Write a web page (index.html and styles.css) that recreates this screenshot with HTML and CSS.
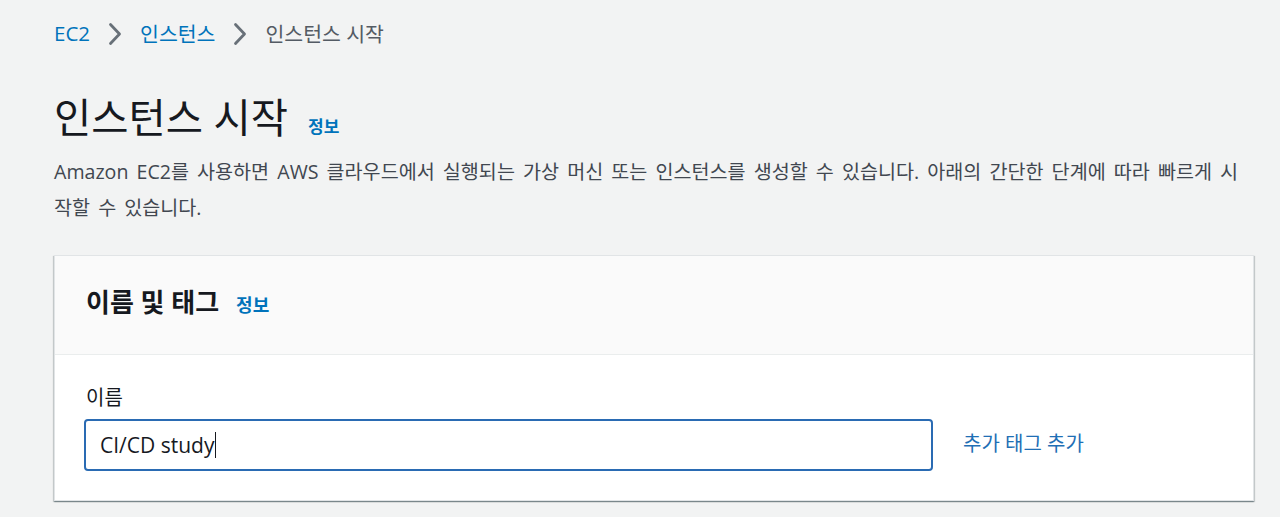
FILE: index.html
```html
<!DOCTYPE html>
<html lang="ko">
<head>
<meta charset="utf-8">
<link rel="stylesheet" href="styles.css">
</head>
<body>
<div class="page">
  <nav class="crumbs">
    <a class="crumb-link">EC2</a>
    <svg class="chev" viewBox="0 0 14 24" width="14" height="24"><path d="M2.5 2.5 L11.5 12 L2.5 21.5" fill="none" stroke="#687078" stroke-width="2.8" stroke-linecap="round" stroke-linejoin="round"/></svg>
    <a class="crumb-link">인스턴스</a>
    <svg class="chev" viewBox="0 0 14 24" width="14" height="24"><path d="M2.5 2.5 L11.5 12 L2.5 21.5" fill="none" stroke="#687078" stroke-width="2.8" stroke-linecap="round" stroke-linejoin="round"/></svg>
    <span class="crumb-current">인스턴스 시작</span>
  </nav>
  <header class="title-row">
    <h1 class="title">인스턴스 시작</h1>
    <a class="info">정보</a>
  </header>
  <p class="desc">Amazon EC2를 사용하면 AWS 클라우드에서 실행되는 가상 머신 또는 인스턴스를 생성할 수 있습니다. 아래의 간단한 단계에 따라 빠르게 시작할 수 있습니다.</p>
  <section class="card">
    <div class="card-head">
      <h2 class="card-title">이름 및 태그</h2>
      <a class="info info-card">정보</a>
    </div>
    <div class="card-body">
      <label class="label">이름</label>
      <div class="field-row">
        <div class="input"><span class="input-text">CI/CD study</span><span class="caret"></span></div>
        <a class="add-tag">추가 태그 추가</a>
      </div>
    </div>
  </section>
</div>
</body>
</html>
```
FILE: styles.css
```css
* { box-sizing: border-box; }
html, body { margin: 0; padding: 0; }
body {
  background: #f2f3f3;
  font-family: "Open Sans", "Noto Sans CJK KR", sans-serif;
  color: #16191f;
  height: 517px;
  overflow: hidden;
}
.page { padding: 0 26px 0 54px; }
.crumbs {
  display: flex;
  align-items: center;
  height: 34px;
  margin-top: 16px;
  font-size: 20.5px;
}
.crumb-link { color: #0073bb; }
.crumb-current { color: #545b64; }
.chev { margin: 1px 18px 0 18px; }
.title-row {
  display: flex;
  align-items: baseline;
  margin-top: 43px;
}
.title {
  margin: 0;
  font-size: 40.5px;
  font-weight: 400;
  line-height: 50px;
}
.info {
  color: #0073bb;
  font-size: 17px;
  font-weight: 700;
  margin-left: 20px;
}
.desc {
  margin: 11px 0 0 0;
  font-size: 19.6px;
  line-height: 36px;
  color: #414750;
  max-width: 1192px;
  word-spacing: 3px;
  word-break: break-all;
}
.card {
  margin-top: 29px;
  background: #fff;
  border: 1px solid #e1e4e6;
  box-shadow: 0 1px 1px 0 rgba(0,28,36,0.3), 1px 1px 1px 0 rgba(0,28,36,0.15), -1px 1px 1px 0 rgba(0,28,36,0.15);
}
.card-head {
  display: flex;
  align-items: baseline;
  background: #fafafa;
  border-bottom: 1px solid #eaeded;
  height: 99px;
  padding: 27px 31px 0 31px;
}
.card-title {
  margin: 0;
  font-size: 26px;
  font-weight: 700;
  line-height: 38px;
}
.info-card { margin-left: 17px; font-size: 18px; }
.card-body { padding: 29px 31px 29px 29px; }
.label {
  display: block;
  font-size: 20px;
  line-height: 28px;
  color: #16191f;
  padding-left: 2px;
}
.field-row {
  display: flex;
  align-items: center;
  margin-top: 7px;
}
.input {
  display: flex;
  align-items: center;
  width: 849px;
  height: 52px;
  border: 2px solid #2a6bb3;
  border-radius: 4px;
  background: #fff;
  padding: 0 14px;
}
.input-text { font-size: 21px; color: #16191f; }
.caret {
  display: inline-block;
  width: 1px;
  height: 26px;
  background: #16191f;
  margin-left: 1px;
}
.add-tag {
  margin-left: 30px;
  margin-bottom: 6px;
  color: #1f6fb5;
  font-size: 20px;
}
```
